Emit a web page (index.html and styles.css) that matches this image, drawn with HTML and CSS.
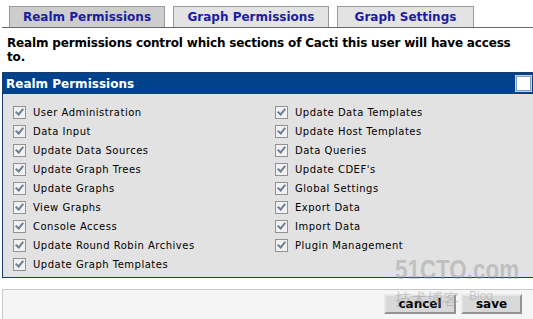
FILE: index.html
```html
<!DOCTYPE html>
<html lang="en">
<head>
    <meta charset="UTF-8">
    <title>Cacti | User Management</title>
    <link rel="stylesheet" href="styles.css">
</head>
<body>
    <div class="tabs">
        <div class="tab selected">Realm Permissions</div>
        <div class="tab">Graph Permissions</div>
        <div class="tab">Graph Settings</div>
    </div>

    <div class="description">Realm permissions control which sections of Cacti this user will have access to.</div>

    <div class="panel">
        <div class="panel-header">
            <span>Realm Permissions</span>
            <span class="select-all"></span>
        </div>
        <div class="realms">
            <div class="realm"><span class="cb"></span>User Administration</div>
            <div class="realm"><span class="cb"></span>Data Input</div>
            <div class="realm"><span class="cb"></span>Update Data Sources</div>
            <div class="realm"><span class="cb"></span>Update Graph Trees</div>
            <div class="realm"><span class="cb"></span>Update Graphs</div>
            <div class="realm"><span class="cb"></span>View Graphs</div>
            <div class="realm"><span class="cb"></span>Console Access</div>
            <div class="realm"><span class="cb"></span>Update Round Robin Archives</div>
            <div class="realm"><span class="cb"></span>Update Graph Templates</div>
            <div class="realm"><span class="cb"></span>Update Data Templates</div>
            <div class="realm"><span class="cb"></span>Update Host Templates</div>
            <div class="realm"><span class="cb"></span>Data Queries</div>
            <div class="realm"><span class="cb"></span>Update CDEF's</div>
            <div class="realm"><span class="cb"></span>Global Settings</div>
            <div class="realm"><span class="cb"></span>Export Data</div>
            <div class="realm"><span class="cb"></span>Import Data</div>
            <div class="realm"><span class="cb"></span>Plugin Management</div>
        </div>
    </div>

    <div class="actions">
        <button class="button">cancel</button>
        <button class="button">save</button>
    </div>

    <!-- watermark from the original screenshot -->
    <div class="watermark">
        <div class="wm-big">51CTO.com</div>
        <div class="wm-small">技术博客<span>Blog</span></div>
    </div>
</body>
</html>
```

FILE: styles.css
```css
body {
    margin: 0;
    background-color: white;
    font-family: 'DejaVu Sans', Verdana, sans-serif;
    color: black;
    overflow: hidden;
    position: relative;
}

.tabs {
    display: flex;
    gap: 8px;
    margin-left: 2px;
    padding: 6px 0 0 7px;
    border-bottom: 1px solid #6a6a6a;
    height: 21px;
}

.tab {
    width: 156px;
    height: 21px;
    box-sizing: border-box;
    background-color: #e3e3e3;
    border: 1px solid #9a9a9a;
    border-bottom: none;
    color: #1c1ca4;
    font-weight: bold;
    font-size: 12px;
    line-height: 21px;
    text-align: center;
}

.tab.selected {
    background-color: #cdcdcd;
}

.tab:last-child {
    width: 137px;
}

.description {
    padding: 8px 7px 0 7px;
    font-weight: bold;
    font-size: 12px;
    line-height: 14px;
    letter-spacing: -0.17px;
}

.panel {
    margin: 8px -4px 0 2px;
    border: 1px solid #1a3d6e;
    background-color: #e2e2e2;
}

.panel-header {
    display: flex;
    justify-content: space-between;
    align-items: center;
    height: 21px;
    padding: 0 2px 0 3px;
    background-color: #00438c;
    color: white;
    font-weight: bold;
    font-size: 12px;
}

.select-all {
    width: 13px;
    height: 13px;
    margin-right: 3px;
    background-color: white;
    border: 1px solid #7f9db9;
    outline: 1px solid #c9d4e2;
}

.realms {
    display: grid;
    grid-auto-flow: column;
    grid-template-rows: repeat(9, 19px);
    grid-template-columns: 262px 1fr;
    padding: 9px 0 3px 10px;
}

.realm {
    display: flex;
    align-items: center;
    gap: 7px;
    font-size: 10px;
    letter-spacing: 0.5px;
}

.cb {
    position: relative;
    width: 11px;
    height: 11px;
    border: 1px solid #8f9398;
    background-color: #f1f1f1;
}

.cb::after {
    content: '';
    position: absolute;
    left: 3px;
    top: 0px;
    width: 3px;
    height: 6px;
    border: solid #6d7f93;
    border-width: 0 2px 2px 0;
    transform: rotate(40deg);
}

.actions {
    display: flex;
    justify-content: flex-end;
    gap: 5px;
    margin: 11px 0 0 2px;
    height: 30px;
    padding: 4px 11px 0 0;
    box-sizing: border-box;
    background-color: #f5f5f5;
    border-top: 1px solid #c8c8c8;
    border-left: 1px solid #c8c8c8;
}

.button {
    height: 20px;
    padding: 0 10px;
    background-color: #d8d8d8;
    border: 2px outset #e8e8e8;
    font-family: 'DejaVu Sans', Verdana, sans-serif;
    font-weight: bold;
    font-size: 12px;
    color: black;
}

.button:first-child {
    width: 72px;
}

.button:last-child {
    width: 61px;
}

.watermark {
    position: absolute;
    left: 395px;
    top: 254px;
    width: 125px;
    color: rgba(150, 150, 150, 0.45);
    font-family: 'Liberation Sans', Arial, sans-serif;
    pointer-events: none;
}

.wm-big {
    font-size: 28px;
    font-weight: bold;
    line-height: 32px;
    transform: scaleX(0.8);
    transform-origin: left;
    white-space: nowrap;
}

.wm-small {
    font-family: 'Noto Sans CJK SC', sans-serif;
    font-size: 16px;
    line-height: 20px;
    white-space: nowrap;
}

.wm-small span {
    font-family: 'Liberation Sans', Arial, sans-serif;
    font-size: 12px;
    margin-left: 10px;
    vertical-align: 5px;
}
```
